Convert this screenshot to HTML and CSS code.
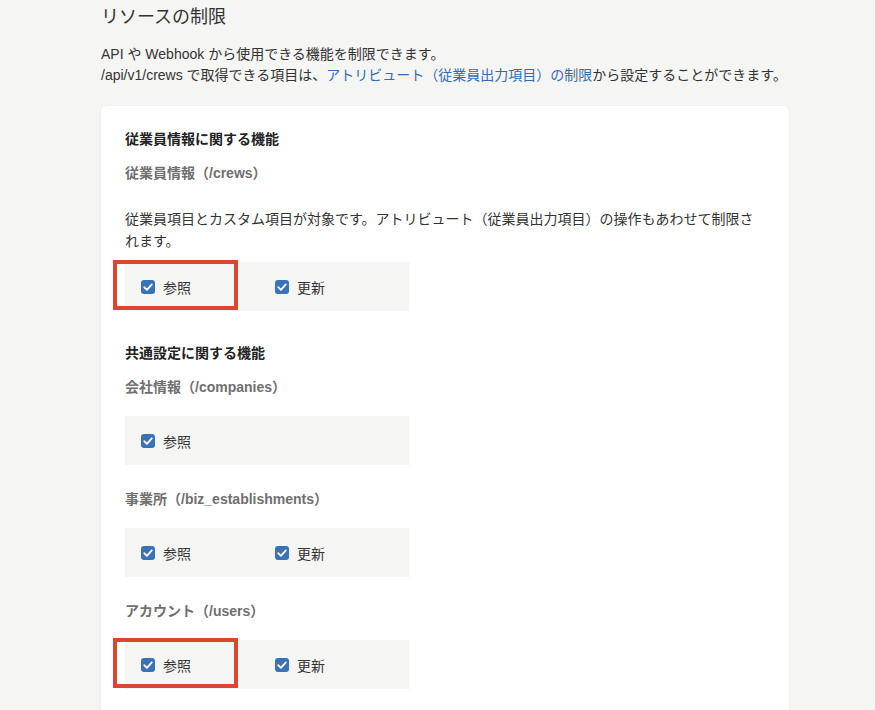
FILE: index.html
```html
<!DOCTYPE html>
<html lang="ja">
<head>
<meta charset="utf-8">
<title>リソースの制限</title>
<link rel="stylesheet" href="styles.css">
</head>
<body>
<main class="page">
  <h1 class="page-title">リソースの制限</h1>
  <p class="intro">
    API や Webhook から使用できる機能を制限できます。<br>
    /api/v1/crews で取得できる項目は、<a class="link" href="#">アトリビュート（従業員出力項目）の制限</a>から設定することができます。
  </p>

  <section class="card">
    <div class="group">
      <h2 class="group-title">従業員情報に関する機能</h2>
      <div class="resource">
        <h3 class="resource-title">従業員情報（/crews）</h3>
        <p class="resource-note">従業員項目とカスタム項目が対象です。アトリビュート（従業員出力項目）の操作もあわせて制限されます。</p>
        <div class="perm-box">
          <label class="perm"><span class="check"><svg viewBox="0 0 14 14"><path d="M3.2 7.2 L5.9 9.8 L10.8 4.4"/></svg></span>参照</label>
          <label class="perm"><span class="check"><svg viewBox="0 0 14 14"><path d="M3.2 7.2 L5.9 9.8 L10.8 4.4"/></svg></span>更新</label>
          <span class="mark"></span>
        </div>
      </div>
    </div>

    <div class="group">
      <h2 class="group-title">共通設定に関する機能</h2>
      <div class="resource">
        <h3 class="resource-title">会社情報（/companies）</h3>
        <div class="perm-box">
          <label class="perm"><span class="check"><svg viewBox="0 0 14 14"><path d="M3.2 7.2 L5.9 9.8 L10.8 4.4"/></svg></span>参照</label>
        </div>
      </div>
      <div class="resource">
        <h3 class="resource-title">事業所（/biz_establishments）</h3>
        <div class="perm-box">
          <label class="perm"><span class="check"><svg viewBox="0 0 14 14"><path d="M3.2 7.2 L5.9 9.8 L10.8 4.4"/></svg></span>参照</label>
          <label class="perm"><span class="check"><svg viewBox="0 0 14 14"><path d="M3.2 7.2 L5.9 9.8 L10.8 4.4"/></svg></span>更新</label>
        </div>
      </div>
      <div class="resource">
        <h3 class="resource-title">アカウント（/users）</h3>
        <div class="perm-box">
          <label class="perm"><span class="check"><svg viewBox="0 0 14 14"><path d="M3.2 7.2 L5.9 9.8 L10.8 4.4"/></svg></span>参照</label>
          <label class="perm"><span class="check"><svg viewBox="0 0 14 14"><path d="M3.2 7.2 L5.9 9.8 L10.8 4.4"/></svg></span>更新</label>
          <span class="mark"></span>
        </div>
      </div>
    </div>
  </section>
</main>
</body>
</html>
```

FILE: styles.css
```css
html, body {
  margin: 0;
  padding: 0;
  background: #f5f5f4;
  overflow: hidden;
}

body {
  font-family: "Liberation Sans", "Noto Sans CJK JP", sans-serif;
  color: #333;
  font-size: 14px;
}

.page {
  width: 688px;
  margin-left: 101px;
  padding-top: 3px;
}

.page-title {
  margin: 0;
  font-size: 18px;
  line-height: 28px;
  font-weight: 400;
  color: #333;
}

.intro {
  margin: 13px 0 0;
  font-size: 14px;
  line-height: 21px;
  color: #333;
}

.link {
  color: #2f6cb3;
  text-decoration: none;
}

.card {
  margin-top: 20px;
  background: #fff;
  border-radius: 6px;
  box-shadow: 0 1px 3px rgba(0, 0, 0, 0.08);
  padding: 22px 24px 40px;
  min-height: 700px;
}

.group + .group {
  margin-top: 31px;
}

.group-title {
  margin: 0;
  font-size: 14px;
  line-height: 22px;
  font-weight: 700;
  color: #222;
}

.resource {
  margin-top: 12px;
}

.group .resource + .resource {
  margin-top: 23px;
}

.resource-title {
  margin: 0 0 18px;
  font-size: 14px;
  line-height: 22px;
  font-weight: 700;
  color: #6f6f6f;
}

.resource-note {
  margin: 24px 0 10px;
  font-size: 14px;
  line-height: 22px;
  color: #333;
}

.perm-box {
  position: relative;
  display: flex;
  width: 268px;
  height: 49px;
  padding-left: 16px;
  background: #f5f5f4;
}

.perm {
  display: flex;
  align-items: center;
  width: 134px;
  font-size: 14px;
  color: #333;
}

.check {
  display: inline-flex;
  width: 14px;
  height: 14px;
  margin-right: 8px;
  border-radius: 3px;
  background: #3a72b8;
}

.check svg {
  width: 14px;
  height: 14px;
}

.check path {
  fill: none;
  stroke: #fff;
  stroke-width: 1.8;
  stroke-linecap: round;
  stroke-linejoin: round;
}

/* red emphasis frame drawn over the first permission */
.mark {
  position: absolute;
  left: -12px;
  top: -2px;
  width: 125px;
  height: 50px;
  box-sizing: border-box;
  border: 4px solid #dc4530;
  pointer-events: none;
}
```
